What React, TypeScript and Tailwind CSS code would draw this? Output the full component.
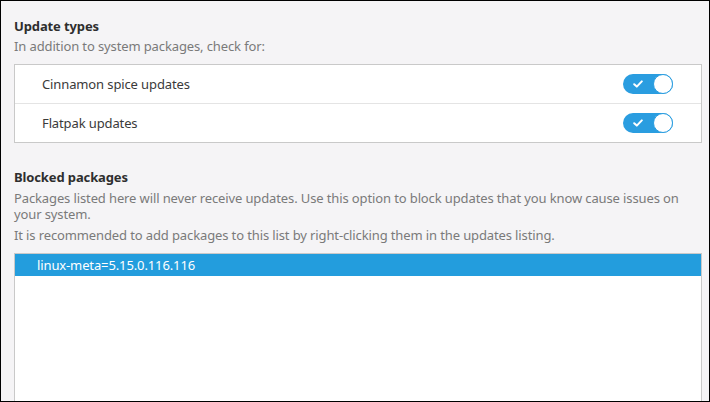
import React from "react";

function Switch() {
  return (
    <div className="relative w-[50px] h-[20px] rounded-full bg-[#2a9de0] shrink-0">
      <svg
        className="absolute left-[10px] top-[6px]"
        width="10"
        height="8"
        viewBox="0 0 10 8"
        fill="none"
      >
        <path d="M1.2 4.2 L3.8 6.6 L8.8 1.4" stroke="#ffffff" strokeWidth="2" strokeLinecap="round" strokeLinejoin="round" />
      </svg>
      <div className="absolute right-0 top-0 w-[20px] h-[20px] rounded-full bg-white border border-[#2a9de0]" />
    </div>
  );
}

function Row({ label, last }: { label: string; last?: boolean }) {
  return (
    <div
      className={
        "flex items-center justify-between pl-[27px] pr-[28px] " +
        (last ? "h-[38px]" : "border-b border-[#e4e4e4] h-[39px]")
      }
    >
      <span className="text-[#3a3a3a] leading-[16px]">{label}</span>
      <Switch />
    </div>
  );
}

export default function App() {
  return (
    <div
      className="w-[710px] h-[402px] border border-black bg-[#f5f4f6] overflow-hidden text-[13px] tracking-[-0.12px]"
      style={{ fontFamily: '"Noto Sans", "DejaVu Sans", sans-serif' }}
    >
      <div className="pl-[13px] pr-[7px] pt-[17px] flex flex-col">
        <div className="font-bold text-[#2e2e2e] leading-[16px]">Update types</div>
        <div className="mt-[4px] text-[#7a7a7a] leading-[16px]">In addition to system packages, check for:</div>
        <div className="mt-[10px] border border-[#c9c9c9] bg-white flex flex-col">
          <Row label="Cinnamon spice updates" />
          <Row label="Flatpak updates" last />
        </div>

        <div className="mt-[26px] font-bold text-[#2e2e2e] leading-[16px]">Blocked packages</div>
        <div className="mt-[5px] text-[#7a7a7a] leading-[16px]">
          Packages listed here will never receive updates. Use this option to block updates that you know cause issues on
          your system.
        </div>
        <div className="mt-[5px] text-[#7a7a7a] leading-[16px]">
          It is recommended to add packages to this list by right-clicking them in the updates listing.
        </div>
        <div className="mt-[10px] border border-[#c9c9c9] bg-white h-[200px]">
          <div className="h-[22px] bg-[#239ddd] text-white flex items-center pl-[22px] leading-[16px]">
            linux-meta=5.15.0.116.116
          </div>
        </div>
      </div>
    </div>
  );
}
